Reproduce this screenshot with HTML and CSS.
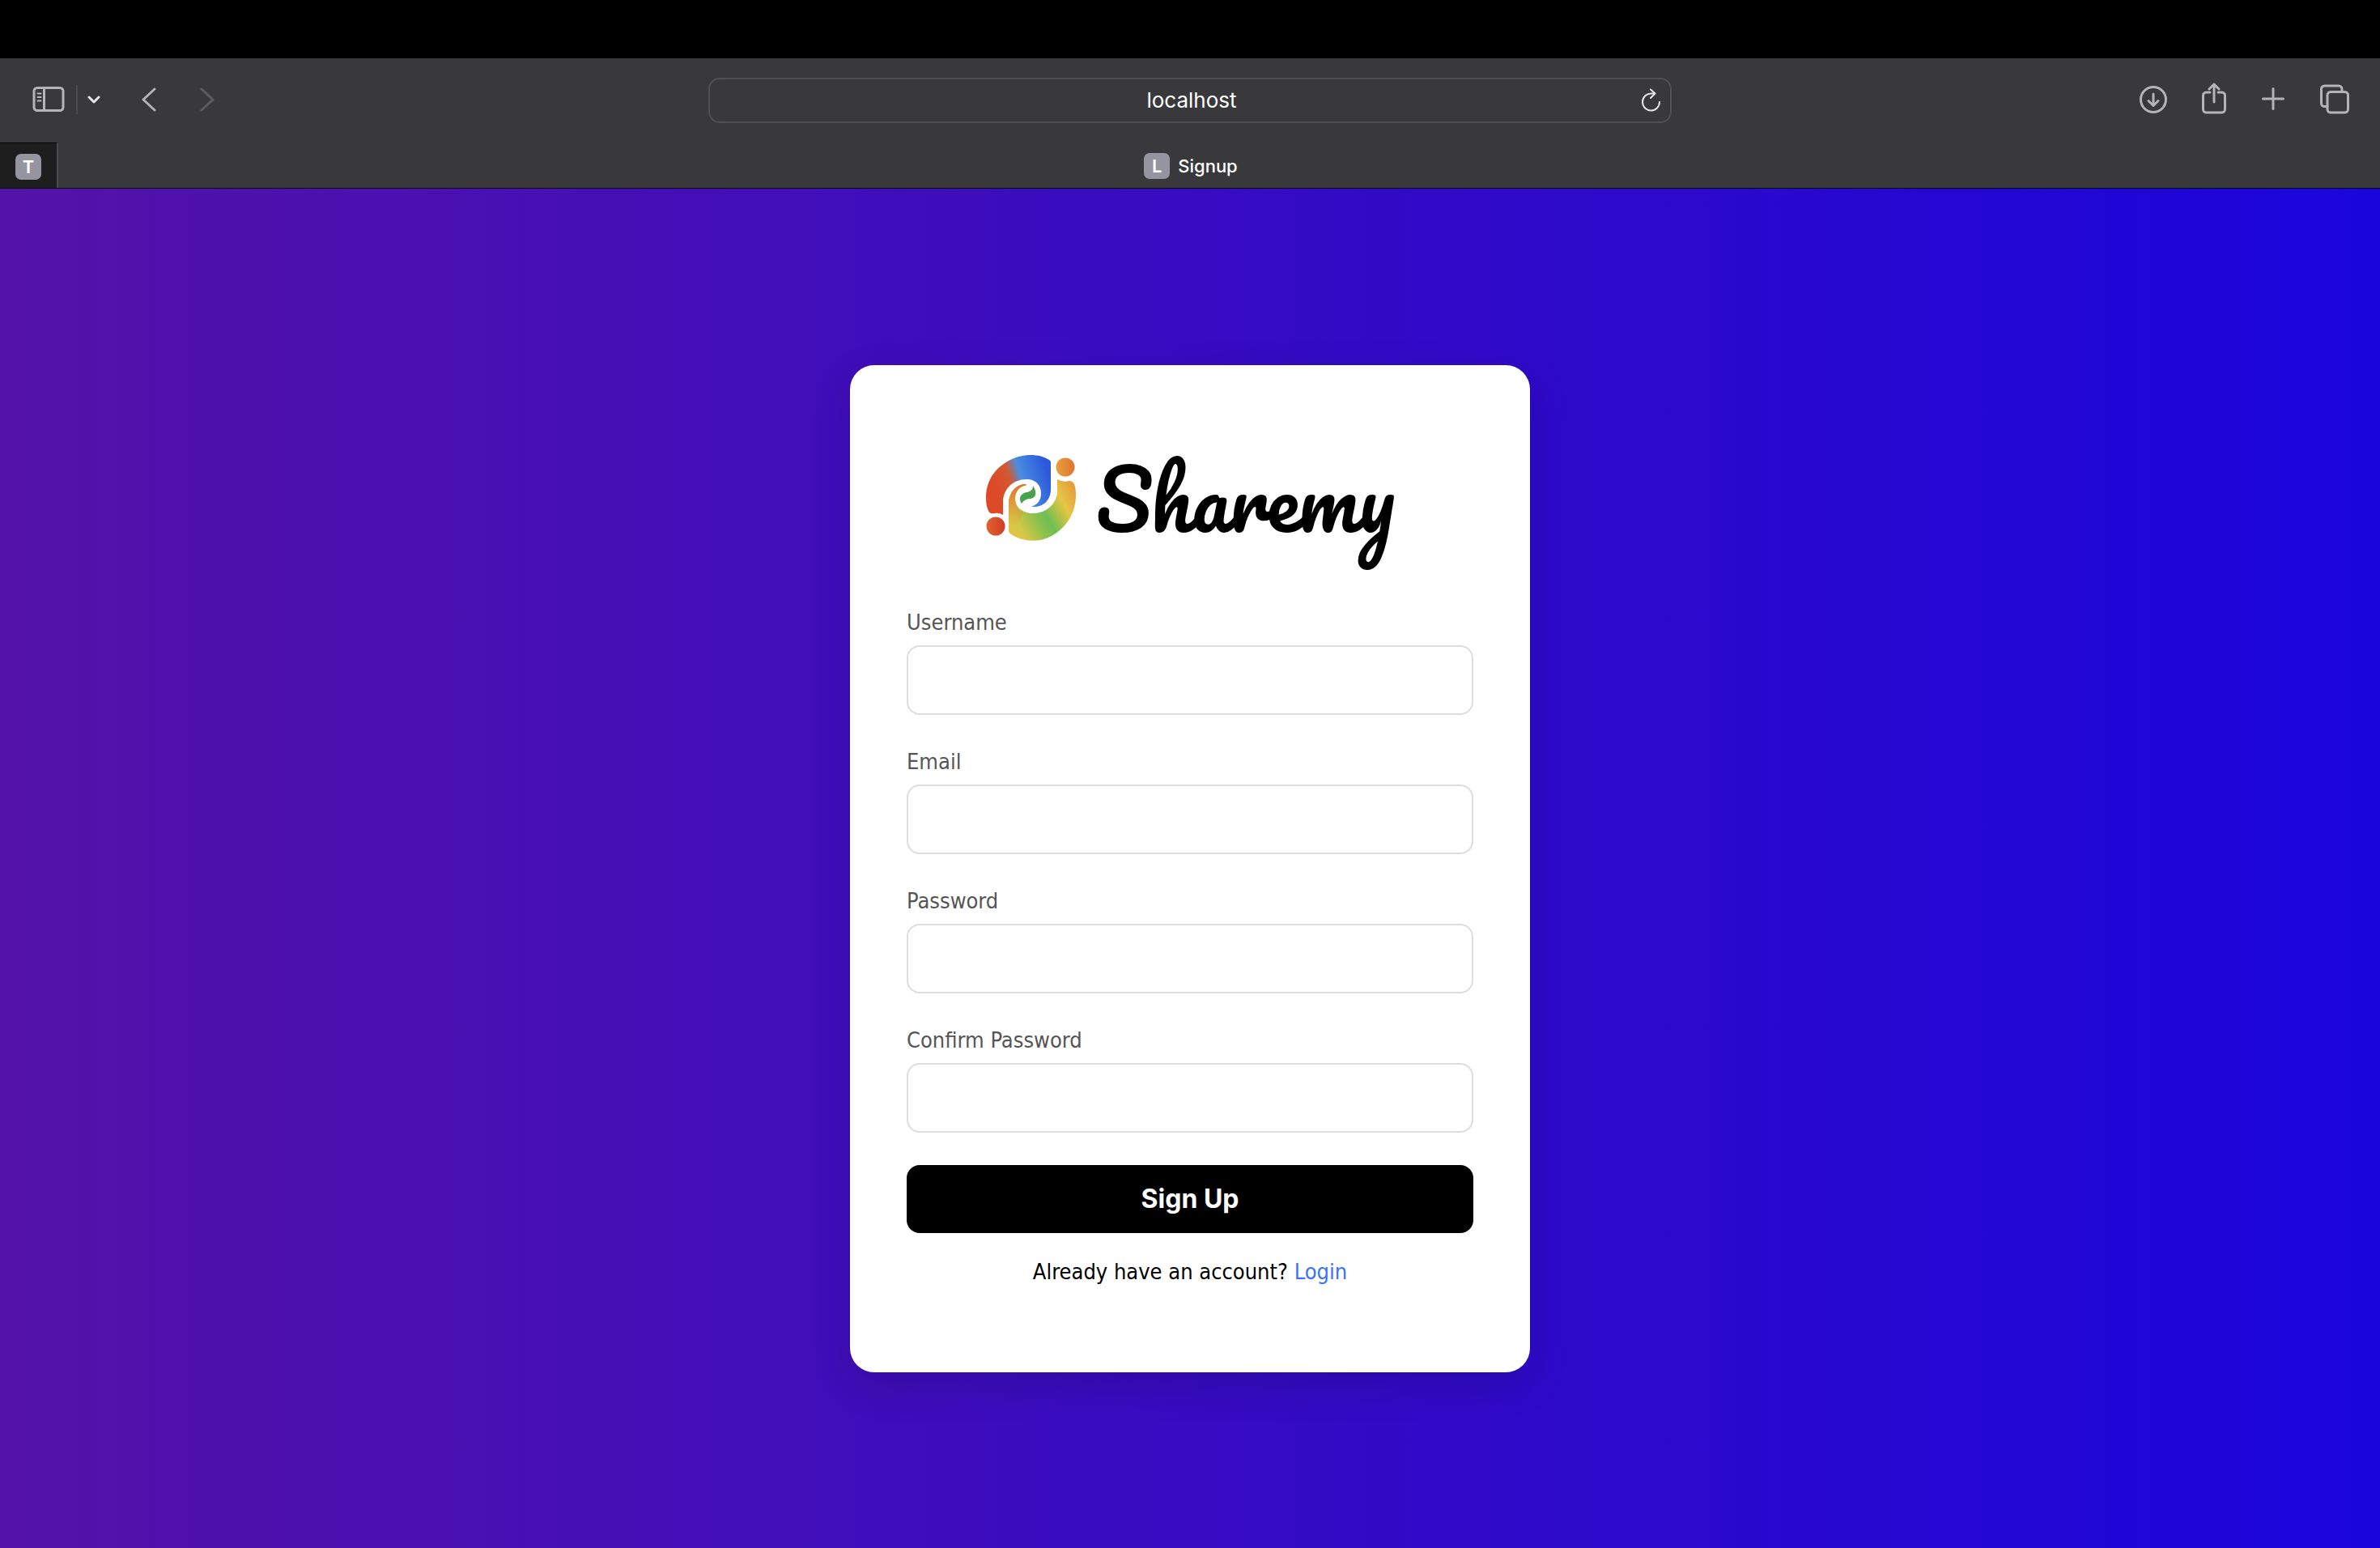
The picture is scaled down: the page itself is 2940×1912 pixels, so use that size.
FILE: index.html
```html
<!DOCTYPE html>
<html lang="en">
<head>
<meta charset="utf-8">
<title>Signup</title>
<link rel="stylesheet" href="styles.css">
</head>
<body>
<div class="bezel"></div>
<header class="browser">
  <div class="toolbar">
    <div class="tools">
      <button class="icon-button" type="button" aria-label="Sidebar">
        <svg class="icon" width="40" height="32" viewBox="0 0 40 32"><rect x="2" y="1.5" width="36" height="28" rx="4"/><path d="M14.500 1.500v28"/><path class="fine" d="M6.500 8.500h4M6.500 13h4M6.500 17.500h4"/></svg>
      </button>
      <span class="divider"></span>
      <button class="icon-button" type="button" aria-label="Tab groups">
        <svg class="icon bright" width="16" height="12" viewBox="0 0 16 12"><path d="M2 3l6 6 6-6"/></svg>
      </button>
      <button class="icon-button back" type="button" aria-label="Back">
        <svg class="icon" width="20" height="32" viewBox="0 0 20 32"><path d="M17 3L3 16l14 13"/></svg>
      </button>
      <button class="icon-button" type="button" aria-label="Forward" disabled>
        <svg class="icon dim" width="20" height="32" viewBox="0 0 20 32"><path d="M3 3l14 13L3 29"/></svg>
      </button>
    </div>
    <div class="address">
      <input class="address-input" type="text" value="localhost" aria-label="Address">
      <button class="icon-button reload" type="button" aria-label="Reload">
        <svg class="icon bright" width="26" height="30" viewBox="0 0 26 30"><path d="M23 17a10.500 10.500 0 1 1-10.500-10.500h4.500M12 1.500l5.500 5-5.500 5.500"/></svg>
      </button>
    </div>
    <div class="tools tools-end">
      <button class="icon-button" type="button" aria-label="Downloads">
        <svg class="icon" width="36" height="40" viewBox="0 0 36 40"><circle cx="18" cy="21" r="15.500"/><path d="M18 14v14M12 22.500l6 6 6-6"/></svg>
      </button>
      <button class="icon-button" type="button" aria-label="Share">
        <svg class="icon" width="32" height="40" viewBox="0 0 32 40"><path d="M10 12H5.500a4 4 0 0 0-4 4v17a4 4 0 0 0 4 4h19a4 4 0 0 0 4-4V16a4 4 0 0 0-4-4H20M15 24V2.500M9 8l6-6 6 6"/></svg>
      </button>
      <button class="icon-button" type="button" aria-label="New tab">
        <svg class="icon" width="28" height="40" viewBox="0 0 28 40"><path d="M14 7.500v25M1.500 20h25"/></svg>
      </button>
      <button class="icon-button" type="button" aria-label="Tab overview">
        <svg class="icon" width="38" height="40" viewBox="0 0 38 40"><rect x="11" y="11.500" width="25.500" height="25.500" rx="4"/><path d="M11 29.500H7.500a4 4 0 0 1-4-4V8a4 4 0 0 1 4-4H25a4 4 0 0 1 4 4v3.500"/></svg>
      </button>
    </div>
  </div>
  <nav class="tabs">
    <a class="tab pinned" href="#"><span class="favicon">T</span></a>
    <a class="tab current" href="#"><span class="favicon">L</span>Signup</a>
  </nav>
</header>
<main class="page">
  <form class="card">
    <div class="logo">
      <svg width="114" height="110" viewBox="0 0 114 110" aria-hidden="true">
        <defs>
          <linearGradient id="cool" gradientUnits="userSpaceOnUse" x1="14" y1="52" x2="80" y2="30">
            <stop offset="0" stop-color="#dc4a28"/><stop offset=".32" stop-color="#d4582f"/><stop offset=".52" stop-color="#4a8de0"/><stop offset="1" stop-color="#2c59dc"/>
          </linearGradient>
          <linearGradient id="warm" gradientUnits="userSpaceOnUse" x1="26" y1="82" x2="106" y2="36">
            <stop offset="0" stop-color="#e0c544"/><stop offset=".12" stop-color="#d2c846"/><stop offset=".38" stop-color="#86c04f"/><stop offset=".5" stop-color="#6fbf53"/><stop offset=".62" stop-color="#a5c24a"/><stop offset=".78" stop-color="#e6c545"/><stop offset="1" stop-color="#e5a03c"/>
          </linearGradient>
          <linearGradient id="hook" x1="0" y1="1" x2="0" y2="0">
            <stop offset="0" stop-color="#e39a3a" stop-opacity="0"/><stop offset=".6" stop-color="#e3963a"/><stop offset="1" stop-color="#dd7434"/>
          </linearGradient>
          <linearGradient id="dotTop"><stop offset="0" stop-color="#e7a03c"/><stop offset="1" stop-color="#df7530"/></linearGradient>
          <linearGradient id="dotLow"><stop offset="0" stop-color="#e0632c"/><stop offset="1" stop-color="#d23c29"/></linearGradient>
        </defs>
        <path fill="url(#cool)" d="M22 75V60C22 43 34 31 51 31C62 31 69 38 69 48C69 58 64 62 57 65C72 66 81 57 81 43V10Q81 8 79 7C69 0 52 -1 38 4C14 13 1 31 1 54C1 61 2 66 4 70Q6 74 11 73Q17 72 22 75Z"/>
        <path fill="url(#warm)" d="M89 31V45C89 61 76 73 59 73C46 73 37 65 37 55C37 45 43 40 51 38Q51 37 49 37C36 38 29 49 29 62V95Q29 97 32 99C46 108 66 110 82 101C102 90 112 71 112 50C112 44 111 39 110 37Q108 33 104 33Q96 35 89 31Z"/>
        <path fill="url(#hook)" d="M29 88V62C29 49 36 38 49 37Q51 37 51 38C43 40 37 45 37 55C37 65 42 70 48 72L40 88Z"/>
        <path fill="#49a34d" d="M59 39C64 46 64 55 54 55Q48 56 45 61C41 55 43 49 51 47Q59 46 59 39Z"/>
        <circle cx="99" cy="16" r="11.500" fill="url(#dotTop)"/>
        <circle cx="13" cy="89" r="11.500" fill="url(#dotLow)"/>
      </svg>
      <span class="wordmark">Sharemy</span>
    </div>
    <div class="field">
      <label for="username">Username</label>
      <input id="username" name="username" type="text">
    </div>
    <div class="field">
      <label for="email">Email</label>
      <input id="email" name="email" type="email">
    </div>
    <div class="field">
      <label for="password">Password</label>
      <input id="password" name="password" type="password">
    </div>
    <div class="field">
      <label for="confirm">Confirm Password</label>
      <input id="confirm" name="confirm" type="password">
    </div>
    <button class="submit" type="submit">Sign Up</button>
    <p class="switch">Already have an account? <a href="#">Login</a></p>
  </form>
</main>
</body>
</html>
```

FILE: styles.css
```css
* {
  box-sizing: border-box;
}

body {
  margin: 0;
  min-height: 100vh;
  display: flex;
  flex-direction: column;
  font-family: Tahoma, "DejaVu Sans Condensed", "Noto Sans", sans-serif;
  font-size: 27px;
  line-height: 36px;
  color: #000;
}

.bezel {
  height: 72px;
  background: #000;
}

/* Browser chrome */
.browser {
  background: #39393b;
  border-bottom: 1px solid #000;
  font-family: Inter, sans-serif;
  color: #fff;
}

.toolbar {
  height: 104px;
  padding: 0 40px;
  display: grid;
  grid-template-columns: 1fr 1190px 1fr;
  align-items: center;
}

.tools {
  display: flex;
  align-items: center;
  padding-bottom: 2px;
}

.tools-end {
  justify-content: flex-end;
  gap: 42px;
  padding-bottom: 4px;
  margin-right: -2px;
}

.icon-button {
  display: flex;
  padding: 0;
  border: 0;
  background: none;
}

.icon {
  fill: none;
  stroke: #b4b4b6;
  stroke-width: 3;
  stroke-linecap: round;
  stroke-linejoin: round;
}

.bright {
  stroke: #e6e6e7;
}

.dim {
  stroke: #5d5d5f;
}

.fine {
  stroke-width: 2;
}

.divider {
  width: 2px;
  height: 36px;
  margin: 0 12px 0 14px;
  background: #4b4b4d;
}

.back {
  margin: 0 52px 0 50px;
}

.address {
  display: flex;
  align-items: center;
  height: 56px;
  padding: 0 10px 0 40px;
  border: 2px solid #505052;
  border-radius: 14px;
}

.address-input {
  flex: 1;
  min-width: 0;
  padding: 0;
  border: 0;
  outline: 0;
  background: none;
  color: #fff;
  font: 26px/32px Inter, sans-serif;
  text-align: center;
}

.reload .icon {
  stroke-width: 2;
}

.tabs {
  display: flex;
  height: 56px;
}

.tab {
  display: flex;
  align-items: center;
  justify-content: center;
  gap: 10px;
  padding-top: 2px;
  color: #fff;
  font-size: 22px;
  font-weight: 500;
  line-height: 28px;
  text-decoration: none;
}

.pinned {
  width: 72px;
  border-top: 1px solid #000;
  border-right: 2px solid #4b4b4d;
  background: #1e1e1f;
}

.current {
  flex: 1;
  padding-right: 70px;
}

.favicon {
  width: 32px;
  height: 32px;
  border-radius: 7px;
  background: #9595a1;
  font-size: 22px;
  font-weight: 600;
  line-height: 32px;
  text-align: center;
}

/* Sign-up page */
.page {
  flex: 1;
  display: flex;
  align-items: center;
  justify-content: center;
  background: linear-gradient(to right, #5412a8, #1a05dc);
}

.card {
  width: 840px;
  padding: 70px;
  border-radius: 30px;
  background: #fff;
  box-shadow: 0 16px 48px rgba(0, 0, 0, 0.15);
}

.logo {
  display: flex;
  align-items: center;
  justify-content: center;
  gap: 22px;
  height: 190px;
  margin-bottom: 40px;
}

.wordmark {
  font-family: Pacifico, cursive;
  font-size: 100px;
  line-height: 120px;
}

.field {
  display: flex;
  flex-direction: column;
  gap: 10px;
  margin-bottom: 40px;
}

.field label {
  color: #555;
}

.field input {
  height: 86px;
  padding: 0 24px;
  border: 2px solid #ddd;
  border-radius: 16px;
  background: #fff;
  font: inherit;
}

.submit {
  display: block;
  width: 100%;
  height: 84px;
  border: 0;
  border-radius: 16px;
  background: #000;
  color: #fff;
  font: 700 32px/40px Inter, sans-serif;
}

.switch {
  margin: 30px 0 36px;
  text-align: center;
}

.switch a {
  color: #3b71fb;
  text-decoration: none;
}
```
